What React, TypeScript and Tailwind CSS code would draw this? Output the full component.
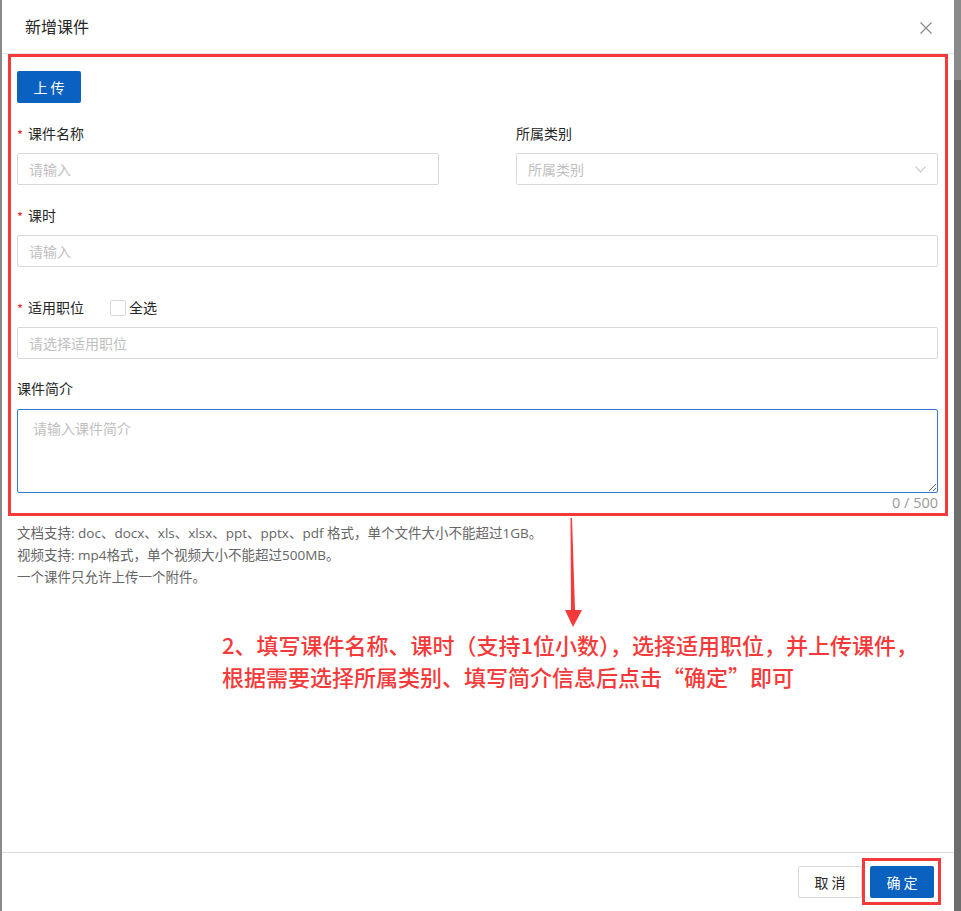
import React from 'react'

const font = { fontFamily: '"Noto Sans CJK SC", "Noto Sans", sans-serif' }
const mixed = { fontFamily: '"Open Sans", "Noto Sans CJK SC", sans-serif' }

function Label({ text, required }: { text: string; required?: boolean }) {
  return (
    <div className="flex h-[22px] items-center text-[14px] leading-[20px] text-[#262626]">
      {required && <span className="mr-[5px] mt-[1px] text-[13px] text-[#f5222d]">*</span>}
      <span className="-mt-[2px]">{text}</span>
    </div>
  )
}

function TextInput({ placeholder }: { placeholder: string }) {
  return (
    <input
      placeholder={placeholder}
      className="block h-[32px] w-full rounded-[2px] border border-[#d9d9d9] px-[11px] text-[14px] text-[#262626] outline-none placeholder:text-[#bfbfbf]"
    />
  )
}

export default function App() {
  return (
    <div className="relative flex h-[911px] w-[961px] overflow-hidden bg-white" style={font}>
      {/* left edge of the mask */}
      <div className="w-[2px] shrink-0 bg-[#8a8a8a]" />

      {/* dialog */}
      <div className="flex min-w-0 flex-1 flex-col">
        <div className="flex h-[54px] shrink-0 items-center justify-between border-b border-[#e8e8e8] pl-[23px] pr-[22px]">
          <span className="-mt-[2px] text-[16px] leading-[22px] text-[#262626]">新增课件</span>
          <svg width="12" height="12" viewBox="0 0 12 12" className="mt-[2px]">
            <path d="M0.5 0.5 L11.5 11.5 M11.5 0.5 L0.5 11.5" stroke="#8c8c8c" strokeWidth="1.3" fill="none" />
          </svg>
        </div>

        <div className="flex-1 pl-[15px] pr-[16px] pt-[17px]">
          <button className="h-[32px] w-[64px] rounded-[2px] bg-[#0b61c0] text-[14px] text-white">上 传</button>

          <div className="mt-[20px] grid grid-cols-2 gap-x-[77px]">
            <div>
              <Label text="课件名称" required />
              <div className="mt-[8px]">
                <TextInput placeholder="请输入" />
              </div>
            </div>
            <div>
              <Label text="所属类别" />
              <div className="mt-[8px] flex h-[32px] items-center justify-between rounded-[2px] border border-[#d9d9d9] pl-[11px] pr-[11px] text-[14px] text-[#bfbfbf]">
                <span>所属类别</span>
                <svg width="11" height="7" viewBox="0 0 11 7">
                  <path d="M0.5 0.5 L5.5 6 L10.5 0.5" stroke="#bfbfbf" strokeWidth="1.1" fill="none" />
                </svg>
              </div>
            </div>
          </div>

          <div className="mt-[20px]">
            <Label text="课时" required />
            <div className="mt-[8px]">
              <TextInput placeholder="请输入" />
            </div>
          </div>

          <div className="mt-[30px]">
            <div className="flex h-[22px] items-center">
              <Label text="适用职位" required />
              <span className="ml-[26px] h-[16px] w-[16px] rounded-[2px] border border-[#d9d9d9] bg-white" />
              <span className="-mt-[2px] ml-[3px] text-[14px] text-[#262626]">全选</span>
            </div>
            <div className="mt-[8px]">
              <TextInput placeholder="请选择适用职位" />
            </div>
          </div>

          <div className="mt-[19px]">
            <Label text="课件简介" />
            <textarea
              placeholder="请输入课件简介"
              className="mt-[9px] block h-[84px] w-full rounded-[2px] border border-[#2f7bd2] px-[15px] py-[7px] text-[14px] leading-[22px] text-[#262626] outline-none placeholder:text-[#bfbfbf]"
            />
            <div className="h-[20px] text-right text-[14.5px] leading-[20px] text-[#999]" style={mixed}>
              0 / 500
            </div>
          </div>

          <div className="mt-[9px] text-[13.5px] leading-[22px] text-[#666]" style={mixed}>
            <p>文档支持: doc、docx、xls、xlsx、ppt、pptx、pdf 格式，单个文件大小不能超过1GB。</p>
            <p>视频支持: mp4格式，单个视频大小不能超过500MB。</p>
            <p>一个课件只允许上传一个附件。</p>
          </div>
        </div>

        <div className="flex h-[59px] shrink-0 items-center justify-end gap-[8px] border-t border-[#dcdcdc] pr-[20px]">
          <button className="h-[32px] w-[64px] rounded-[2px] border border-[#d9d9d9] bg-white text-[14px] text-[#262626]">取 消</button>
          <button className="h-[32px] w-[64px] rounded-[2px] bg-[#0b61c0] text-[14px] text-white">确 定</button>
        </div>
      </div>

      {/* scrollbar strip */}
      <div className="flex w-[7px] shrink-0 flex-col">
        <div className="h-[80px] bg-[#8a8a8a]" />
        <div className="flex-1 bg-[#6d6d6d]" />
      </div>

      {/* annotation overlays */}
      <div className="pointer-events-none absolute left-[8px] top-[54px] h-[462px] w-[940px] border-[3px] border-[#f43a3a]" />
      <div className="pointer-events-none absolute left-[862px] top-[858px] h-[47px] w-[79px] border-[3px] border-[#f43a3a]" />
      <svg className="pointer-events-none absolute left-[560px] top-[516px]" width="26" height="114" viewBox="0 0 26 114">
        <path d="M10.5 2 L12 2 L15 94 L22 94 L13 111 L5 94 L11 94 Z" fill="#f43a3a" />
      </svg>
      <div className="pointer-events-none absolute left-[222px] top-[628px] whitespace-nowrap text-[22px] font-medium leading-[32px] text-[#f43a3a]">
        2、填写课件名称、课时（支持1位小数），选择适用职位，并上传课件，
        <br />
        根据需要选择所属类别、填写简介信息后点击“确定”即可
      </div>
    </div>
  )
}
